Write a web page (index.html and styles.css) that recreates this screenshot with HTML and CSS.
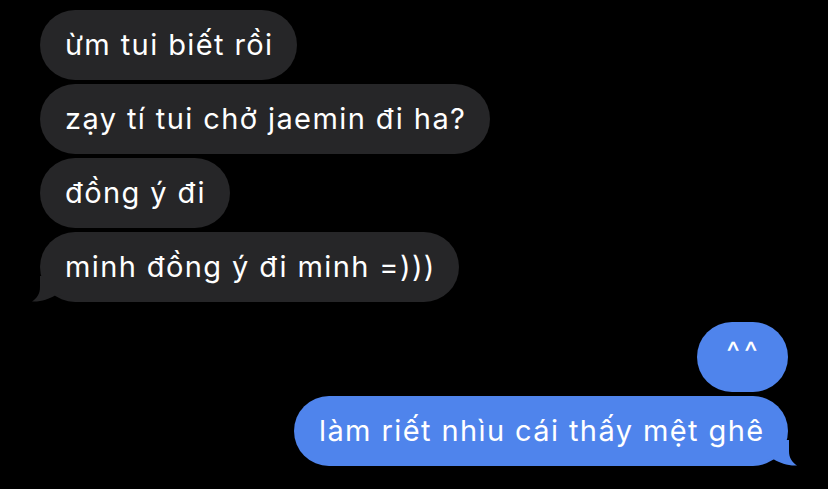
FILE: index.html
```html
<!DOCTYPE html>
<html>
<head>
<meta charset="utf-8">
<link rel="stylesheet" href="styles.css">
</head>
<body>
<div class="thread">
  <div class="group in">
    <div class="bubble gray">ừm tui biết rồi</div>
    <div class="bubble gray">zạy tí tui chở jaemin đi ha?</div>
    <div class="bubble gray">đồng ý đi</div>
    <div class="bubble gray last">minh đồng ý đi minh =)))
      <svg class="tail tail-left" width="30" height="26" viewBox="0 0 30 26"><path d="M8 0 L8 11 C8 18 5 22 0 25.5 C9 26 17 23 23 19.5 L30 19 L30 0 Z" fill="#262628"/></svg>
    </div>
  </div>
  <div class="group out">
    <div class="bubble blue short">^^</div>
    <div class="bubble blue last">làm riết nhìu cái thấy mệt ghê
      <svg class="tail tail-right" width="30" height="26" viewBox="0 0 30 26"><path d="M22 0 L22 11 C22 18 25 22 30 25.5 C21 26 13 23 7 19.5 L0 19 L0 0 Z" fill="#4f84ec"/></svg>
    </div>
  </div>
</div>
</body>
</html>
```
FILE: styles.css
```css
html, body {
  margin: 0;
  padding: 0;
  background: #000;
}
body {
  width: 828px;
  height: 489px;
  overflow: hidden;
  font-family: "Inter", "Noto Sans", sans-serif;
}
.thread {
  display: flex;
  flex-direction: column;
  gap: 20px;
  padding: 10px 40px 0 40px;
}
.group {
  display: flex;
  flex-direction: column;
  gap: 4px;
}
.group.in { align-items: flex-start; }
.group.out { align-items: flex-end; }
.bubble {
  position: relative;
  height: 70px;
  box-sizing: border-box;
  display: flex;
  align-items: center;
  padding: 0 23.5px 2px 25px;
  border-radius: 35px;
  color: #fff;
  font-size: 29px;
  letter-spacing: 1.4px;
  white-space: nowrap;
}
.gray { background: #262628; }
.blue { background: #4f84ec; }
.short {
  min-width: 91px;
  justify-content: center;
  padding: 0 0 12px 3px;
  letter-spacing: 4px;
}
.tail {
  position: absolute;
  bottom: 0;
}
.tail-left { left: -8px; }
.tail-right { right: -9px; }
```
